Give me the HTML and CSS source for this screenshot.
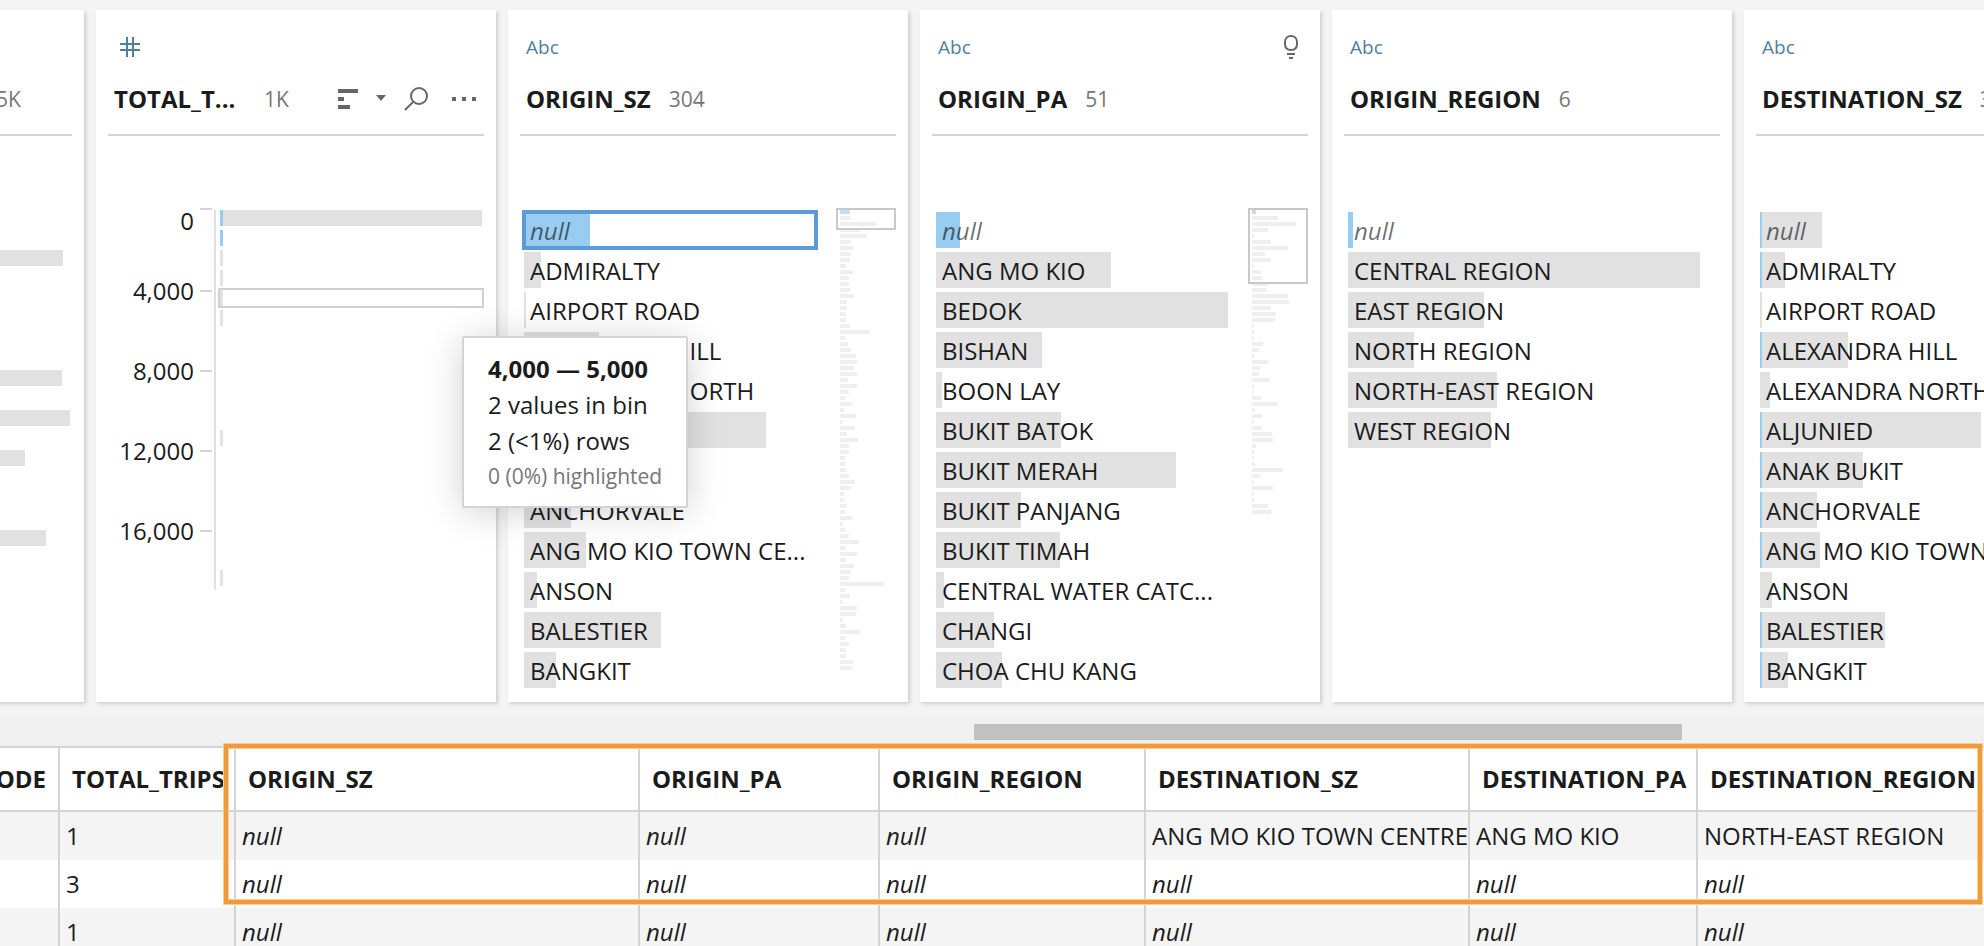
FILE: index.html
```html
<!DOCTYPE html>
<html lang="en">
<head>
<meta charset="utf-8">
<title>Profile pane</title>
<link rel="stylesheet" href="styles.css">
</head>
<body>
<main class="app">
  <section class="profile" aria-label="Profile">
    <article class="card">
      <header class="card-head">
        <div class="type-row"></div>
        <div class="title-row"><span class="count count-start">5K</span></div>
      </header>
      <div class="card-body">
        <div class="bins bins-wide">
          <i></i><i></i><i style="--w:363px"></i><i></i><i></i><i></i><i></i><i></i><i style="--w:362px"></i><i></i><i style="--w:370px"></i><i></i><i style="--w:325px"></i><i></i><i></i><i></i><i style="--w:346px"></i><i></i><i></i>
        </div>
      </div>
    </article>

    <article class="card">
      <header class="card-head">
        <div class="type-row">
          <svg class="icon-number" viewBox="0 0 20 20" width="20" height="20" aria-hidden="true"><path d="M7 0v20M13 0v20M0 7h20M0 13h20"/></svg>
        </div>
        <div class="title-row">
          <h2 class="title title-cut">TOTAL_T...</h2><span class="count">1K</span>
          <div class="tools">
            <button type="button" class="sort" aria-label="Sort">
              <svg viewBox="0 0 48 20" width="48" height="20"><path d="M0 0h20v4H0zM0 8h6v4H0zM0 16h12v4H0zM38 6h10l-5 6z"/></svg>
            </button>
            <button type="button" aria-label="Search">
              <svg viewBox="0 0 32 24" width="32" height="24"><g class="line"><circle cx="16" cy="9" r="8"/><path d="M10 15l-8 8"/></g></svg>
            </button>
            <button type="button" aria-label="More">
              <svg viewBox="0 0 24 4" width="24" height="4"><path d="M0 0h4v4H0zM10 0h4v4h-4zM20 0h4v4h-4z"/></svg>
            </button>
          </div>
        </div>
      </header>
      <div class="card-body">
        <div class="histogram">
          <ol class="scale">
            <li>0</li><li>4,000</li><li>8,000</li><li>12,000</li><li>16,000</li>
          </ol>
          <div class="bins bins-axis">
            <i class="part" style="--w:262px"></i><i class="part" style="--w:3px"></i><i style="--w:3px"></i><i style="--w:3px"></i><i class="hover" style="--w:3px"></i><i style="--w:3px"></i><i></i><i></i><i></i><i></i><i></i><i style="--w:3px"></i><i></i><i></i><i></i><i></i><i></i><i></i><i style="--w:3px"></i>
          </div>
        </div>
      </div>
      <div class="tooltip" role="tooltip">
        <strong>4,000 — 5,000</strong>
        <span>2 values in bin</span>
        <span>2 (&lt;1%) rows</span>
        <small>0 (0%) highlighted</small>
      </div>
    </article>

    <article class="card">
      <header class="card-head">
        <div class="type-row"><span class="type">Abc</span></div>
        <div class="title-row"><h2 class="title">ORIGIN_SZ</h2><span class="count">304</span></div>
      </header>
      <div class="card-body split">
        <ul class="values">
          <li class="null full selected" style="--w:64px">null</li>
          <li style="--w:17px">ADMIRALTY</li>
          <li style="--w:2px">AIRPORT ROAD</li>
          <li style="--w:75px">ALEXANDRA HILL</li>
          <li style="--w:9px">ALEXANDRA NORTH</li>
          <li style="--w:242px">ALJUNIED</li>
          <li style="--w:96px">ANAK BUKIT</li>
          <li style="--w:47px">ANCHORVALE</li>
          <li style="--w:62px">ANG MO KIO TOWN CE...</li>
          <li style="--w:13px">ANSON</li>
          <li style="--w:137px">BALESTIER</li>
          <li style="--w:32px">BANGKIT</li>
        </ul>
        <div class="minimap minimap-short">
          <svg width="56" height="462" data-bars="10 11 36 20 27 11 13 11 10 6 13 9 9 10 14 7 7 6 6 10 30 5 8 11 16 17 14 17 8 17 9 5 12 4 16 3 15 7 18 9 9 5 5 6 9 15 11 4 4 7 5 12 3 5 9 19 6 17 6 14 11 9 44 5 10 3 17 16 3 6 20 5 9 6 6 13 12"></svg>
        </div>
      </div>
    </article>

    <article class="card">
      <header class="card-head">
        <div class="type-row"><span class="type">Abc</span>
          <button type="button" class="hint" aria-label="Recommendations">
            <svg viewBox="0 0 14 24" width="14" height="24"><path class="line" d="M7 1C3.500 1 1 3.500 1 7v2c0 4 2.500 6 6 6s6-2 6-6V7c0-3.500-2.500-6-6-6z"/><path d="M3 18h8v2H3zM5 22h4v2H5z"/></svg>
          </button>
        </div>
        <div class="title-row"><h2 class="title">ORIGIN_PA</h2><span class="count">51</span></div>
      </header>
      <div class="card-body split">
        <ul class="values">
          <li class="null full" style="--w:24px">null</li>
          <li style="--w:175px">ANG MO KIO</li>
          <li style="--w:292px">BEDOK</li>
          <li style="--w:106px">BISHAN</li>
          <li style="--w:6px">BOON LAY</li>
          <li style="--w:125px">BUKIT BATOK</li>
          <li style="--w:240px">BUKIT MERAH</li>
          <li style="--w:85px">BUKIT PANJANG</li>
          <li style="--w:124px">BUKIT TIMAH</li>
          <li style="--w:8px">CENTRAL WATER CATC...</li>
          <li style="--w:58px">CHANGI</li>
          <li style="--w:66px">CHOA CHU KANG</li>
        </ul>
        <div class="minimap minimap-tall">
          <svg width="56" height="306" data-bars="4 26 44 16 2 19 36 13 19 2 9 10 16 15 36 37 19 24 23 2 2 2 11 7 2 16 8 7 18 2 2 9 26 3 10 2 10 20 21 4 2 2 3 31 8 2 21 2 2 16 19"></svg>
        </div>
      </div>
    </article>

    <article class="card">
      <header class="card-head">
        <div class="type-row"><span class="type">Abc</span></div>
        <div class="title-row"><h2 class="title">ORIGIN_REGION</h2><span class="count">6</span></div>
      </header>
      <div class="card-body">
        <ul class="values">
          <li class="null full" style="--w:5px">null</li>
          <li style="--w:352px">CENTRAL REGION</li>
          <li style="--w:136px">EAST REGION</li>
          <li style="--w:66px">NORTH REGION</li>
          <li style="--w:149px">NORTH-EAST REGION</li>
          <li style="--w:143px">WEST REGION</li>
        </ul>
      </div>
    </article>

    <article class="card">
      <header class="card-head">
        <div class="type-row"><span class="type">Abc</span></div>
        <div class="title-row"><h2 class="title">DESTINATION_SZ</h2><span class="count">304</span></div>
      </header>
      <div class="card-body">
        <ul class="values">
          <li class="null part" style="--w:62px">null</li>
          <li class="part" style="--w:25px">ADMIRALTY</li>
          <li style="--w:2px">AIRPORT ROAD</li>
          <li class="part" style="--w:88px">ALEXANDRA HILL</li>
          <li style="--w:10px">ALEXANDRA NORTH</li>
          <li class="part" style="--w:221px">ALJUNIED</li>
          <li class="part" style="--w:103px">ANAK BUKIT</li>
          <li class="part" style="--w:57px">ANCHORVALE</li>
          <li class="part" style="--w:60px">ANG MO KIO TOWN CE...</li>
          <li style="--w:12px">ANSON</li>
          <li class="part" style="--w:125px">BALESTIER</li>
          <li class="part" style="--w:28px">BANGKIT</li>
        </ul>
      </div>
    </article>
  </section>

  <div class="scrollbar"><div class="thumb"></div></div>

  <section class="grid-pane" aria-label="Data grid">
    <table class="grid">
      <colgroup><col class="c-code"><col class="c-trips"><col class="c-osz"><col class="c-opa"><col class="c-oreg"><col class="c-dsz"><col class="c-dpa"><col></colgroup>
      <thead>
        <tr><th scope="col"><span class="clip-start">ODE</span></th><th scope="col">TOTAL_TRIPS</th><th scope="col">ORIGIN_SZ</th><th scope="col">ORIGIN_PA</th><th scope="col">ORIGIN_REGION</th><th scope="col">DESTINATION_SZ</th><th scope="col">DESTINATION_PA</th><th scope="col">DESTINATION_REGION</th></tr>
      </thead>
      <tbody>
        <tr><td></td><td>1</td><td><em>null</em></td><td><em>null</em></td><td><em>null</em></td><td>ANG MO KIO TOWN CENTRE</td><td>ANG MO KIO</td><td>NORTH-EAST REGION</td></tr>
        <tr><td></td><td>3</td><td><em>null</em></td><td><em>null</em></td><td><em>null</em></td><td><em>null</em></td><td><em>null</em></td><td><em>null</em></td></tr>
        <tr><td></td><td>1</td><td><em>null</em></td><td><em>null</em></td><td><em>null</em></td><td><em>null</em></td><td><em>null</em></td><td><em>null</em></td></tr>
      </tbody>
    </table>
    <div class="callout" aria-hidden="true"></div>
  </section>
</main>
<script src="script.js"></script>
</body>
</html>
```

FILE: styles.css
```css
:root {
  --ink: #1b1b1b;
  --muted: #777;
  --icon: #666;
  --bar: #e1e1e1;
  --blue: #98ccf1;
  --rule: #d4d4d4;
  --type: #4e7f9e;
}

*,
*::after { box-sizing: border-box; }

body {
  margin: 0;
  background: #fff;
  color: var(--ink);
  font: 24px/36px "Open Sans", "Noto Sans", sans-serif;
}

.app {
  display: flex;
  flex-direction: column;
  height: 100vh;
  overflow: hidden;
}

/* Profile cards */
.profile {
  display: flex;
  flex: none;
  gap: 12px;
  padding: 10px 0 14px;
  margin-left: -316px;
  background: #f4f4f4;
}

.card {
  position: relative;
  flex: 0 0 400px;
  padding: 22px 12px 12px;
  background: #fff;
  box-shadow: 2px 2px 4px rgba(0, 0, 0, 0.16);
}

.card-head {
  padding: 0 6px 16px;
  border-bottom: 2px solid var(--rule);
}

.type-row,
.title-row {
  display: flex;
  align-items: center;
}

.type-row {
  height: 30px;
  margin-bottom: 18px;
}

.type {
  color: var(--type);
  font-size: 19px;
}

.icon-number {
  margin-left: 6px;
  fill: none;
  stroke: var(--type);
  stroke-width: 2;
}

.title-row { height: 38px; }

.title {
  margin: 0;
  font-size: 24px;
  font-weight: 700;
}

.title-cut { width: 132px; }

.count {
  margin-left: 18px;
  color: var(--muted);
  font-size: 21px;
}

.count-start { margin-left: 294px; }

.tools {
  display: flex;
  align-items: center;
  gap: 17px;
  margin: 0 2px 0 auto;
}

button {
  display: flex;
  padding: 0;
  border: 0;
  background: none;
  fill: var(--icon);
}

.line {
  fill: none;
  stroke: var(--icon);
  stroke-width: 2;
}

.hint { margin: 0 4px 0 auto; }

.card-body {
  padding: 74px 0 0 4px;
}

.split {
  display: flex;
  gap: 24px;
}

/* Value lists */
.values {
  flex: 1;
  margin: 0;
  padding: 0;
  list-style: none;
}

.values li {
  height: 40px;
  padding: 3px 0 0 6px;
  background: linear-gradient(var(--bar), var(--bar)) 0 2px / var(--w) 36px no-repeat;
  white-space: nowrap;
}

.values .null {
  color: rgba(0, 0, 0, 0.58);
  font-style: italic;
}

.values .full {
  background-image: linear-gradient(var(--blue), var(--blue));
}

.values .part {
  background:
    linear-gradient(var(--blue), var(--blue)) 0 2px / 2px 36px no-repeat,
    linear-gradient(var(--bar), var(--bar)) 0 2px / var(--w) 36px no-repeat;
}

.values .selected {
  margin: 0 -2px;
  padding: 0 0 0 4px;
  border: 4px solid #5a9bd8;
  background-position: 0 0;
  line-height: 34px;
}

/* Overview strip beside a value list */
.minimap {
  position: relative;
  width: 56px;
}

.minimap svg { display: block; }

.minimap path {
  fill: none;
  stroke: #efefef;
  stroke-width: 4;
}

.minimap .on { stroke: #c5dff1; }

.minimap::after {
  content: "";
  position: absolute;
  top: -2px;
  left: -4px;
  width: 60px;
  border: 2px solid #c9c9c9;
}

.minimap-short::after { height: 22px; }
.minimap-tall::after { height: 76px; }

/* Histogram */
.histogram { display: flex; }

.scale {
  width: 100px;
  margin: -2px 2px 0 0;
  padding: 0;
  list-style: none;
}

.scale li {
  display: flex;
  align-items: center;
  justify-content: flex-end;
  gap: 6px;
  height: 80px;
}

.scale li::after {
  content: "";
  width: 12px;
  height: 2px;
  background: var(--rule);
}

.scale li:first-child {
  align-items: flex-start;
  height: 43px;
  line-height: 26px;
}

.bins { flex: 1; }

.bins i {
  display: block;
  height: 20px;
  background: linear-gradient(var(--bar), var(--bar)) 0 0 / var(--w, 0) 16px no-repeat;
}

.bins .part {
  background:
    linear-gradient(var(--blue), var(--blue)) 0 0 / 3px 16px no-repeat,
    linear-gradient(var(--bar), var(--bar)) 0 0 / var(--w) 16px no-repeat;
}

.bins-axis {
  padding-left: 4px;
  border-left: 2px solid #e1e1e1;
}

.bins .hover {
  margin: -2px 0 2px -2px;
  border: 2px solid #d0d0d0;
}

.tooltip {
  position: absolute;
  z-index: 2;
  top: 326px;
  left: 366px;
  display: flex;
  flex-direction: column;
  width: 226px;
  padding: 13px 0 13px 24px;
  border: 2px solid var(--rule);
  border-radius: 2px;
  background: #fff;
  box-shadow: 0 4px 36px rgba(0, 0, 0, 0.18);
  white-space: nowrap;
}

.card:has(.tooltip) { z-index: 1; }

.tooltip small {
  color: var(--muted);
  font-size: 21px;
  line-height: 34px;
}

/* Horizontal scrollbar */
.scrollbar {
  flex: none;
  height: 30px;
  padding: 8px 302px 6px 974px;
  background: #f0f0f0;
}

.thumb {
  height: 16px;
  background: #c1c1c1;
}

/* Data grid */
.grid-pane {
  position: relative;
  flex: 1;
  min-height: 0;
}

.grid {
  width: 100%;
  table-layout: fixed;
  border-top: 2px solid var(--rule);
  border-spacing: 0;
}

.c-code { width: 60px; }
.c-trips { width: 176px; }
.c-osz { width: 404px; }
.c-opa { width: 240px; }
.c-oreg { width: 266px; }
.c-dsz { width: 324px; }
.c-dpa { width: 228px; }

.grid th,
.grid td {
  padding: 0 0 0 6px;
  border-right: 2px solid var(--rule);
  text-align: left;
  white-space: nowrap;
}

.grid th {
  height: 64px;
  padding: 0 0 0 12px;
  border-bottom: 2px solid var(--rule);
}

.grid td { height: 48px; }

.grid th:first-child { padding: 0 12px 0 0; }

.grid th:last-child,
.grid td:last-child { border-right: 0; }

.grid tbody tr:nth-child(odd) { background: #f4f4f4; }

.clip-start {
  display: flex;
  justify-content: flex-end;
}

.callout {
  position: absolute;
  top: -2px;
  left: 224px;
  right: 2px;
  height: 160px;
  border: 4px solid #f29a38;
  box-shadow: 0 0 0 1px #f8cd9b, inset 0 0 0 1px #f8cd9b;
}
```

FILE: script.js
```js
// Draws the overview bars; the first bar of each strip is the highlighted one.
document.querySelectorAll("svg[data-bars]").forEach((svg) => {
  const widths = svg.dataset.bars.split(" ");
  const add = (d, cls) => {
    const path = document.createElementNS("http://www.w3.org/2000/svg", "path");
    path.setAttribute("d", d);
    if (cls) path.setAttribute("class", cls);
    svg.append(path);
  };
  add(`M0 2h${widths[0]}`, "on");
  add(widths.slice(1).map((w, i) => `M0 ${8 + i * 6}h${w}`).join(""));
});
```
